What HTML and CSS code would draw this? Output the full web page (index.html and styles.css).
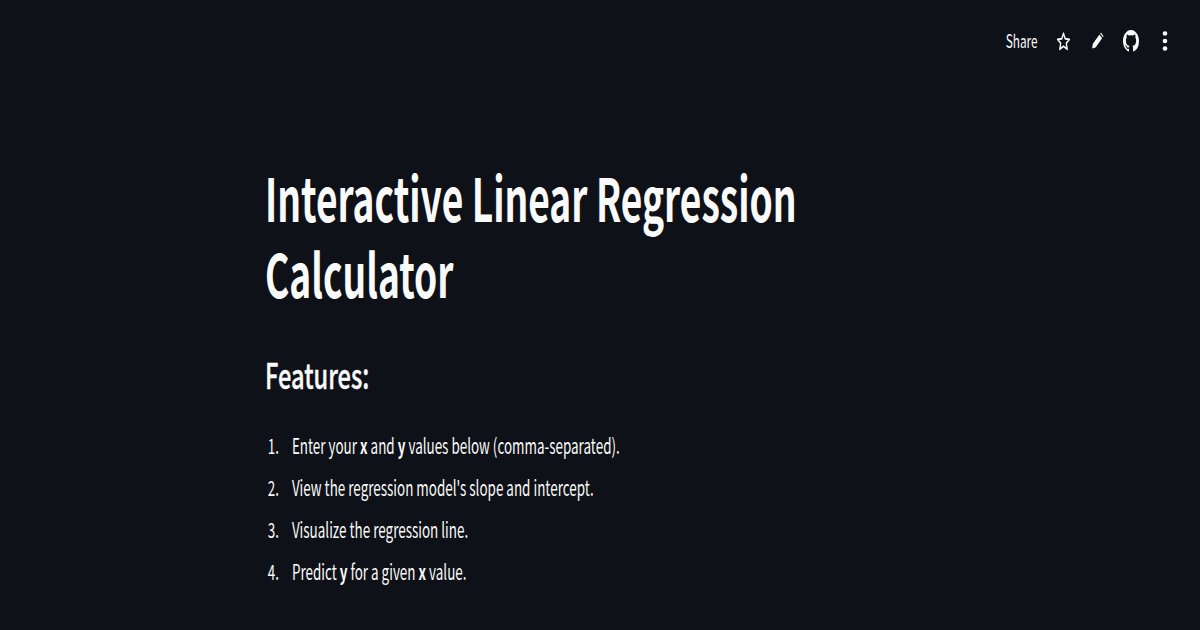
FILE: index.html
```html
<!DOCTYPE html>
<html lang="en">
	<head>
		<meta charset="utf-8" />
		<title>Interactive Linear Regression Calculator</title>
		<link rel="stylesheet" href="styles.css">
	</head>
	<body>
		<header class="toolbar">
			<span class="share">Share</span>
			<svg class="icon star" viewBox="0 0 24 24" preserveAspectRatio="none"><path d="M12 2.600l2.800 6.300 6.700.7-5 4.500 1.400 6.700-5.900-3.400-5.900 3.400 1.400-6.700-5-4.500 6.700-.7z" fill="none" stroke="currentColor" stroke-width="2.200" stroke-linejoin="round"/></svg>
			<svg class="icon pencil" viewBox="0 0 24 24" preserveAspectRatio="none"><path d="M2 22l1.400-6.400L15.600 3.400l5 5L8.400 20.600z M17 2l1.400-1.200 4.800 4.800L22 7z" fill="currentColor"/></svg>
			<svg class="icon github" viewBox="0 0 16 16" preserveAspectRatio="none"><path fill="currentColor" d="M8 0C3.58 0 0 3.58 0 8c0 3.54 2.29 6.53 5.47 7.59.4.07.55-.17.55-.38 0-.19-.01-.82-.01-1.49-2.01.37-2.53-.49-2.69-.94-.09-.23-.48-.94-.82-1.13-.28-.15-.68-.52-.01-.53.63-.01 1.08.58 1.23.82.72 1.21 1.87.87 2.33.66.07-.52.28-.87.51-1.07-1.78-.2-3.64-.89-3.64-3.95 0-.87.31-1.59.82-2.15-.08-.2-.36-1.02.08-2.12 0 0 .67-.21 2.2.82.64-.18 1.32-.27 2-.27s1.36.09 2 .27c1.53-1.04 2.2-.82 2.2-.82.44 1.1.16 1.92.08 2.12.51.56.82 1.27.82 2.15 0 3.07-1.87 3.75-3.65 3.95.29.25.54.73.54 1.48 0 1.07-.01 1.93-.01 2.2 0 .21.15.46.55.38A8.010 8.010 0 0 0 16 8c0-4.420-3.580-8-8-8z"/></svg>
			<svg class="icon dots" viewBox="0 0 10 20"><circle cx="5" cy="2.500" r="2.300" fill="currentColor"/><circle cx="5" cy="10" r="2.300" fill="currentColor"/><circle cx="5" cy="17.500" r="2.300" fill="currentColor"/></svg>
		</header>
		<main class="content">
			<h1 class="title">Interactive Linear Regression<br>Calculator</h1>
			<h2 class="subtitle">Features:</h2>
			<ol class="features">
				<li>Enter your <strong>x</strong> and <strong>y</strong> values below (comma-separated).</li>
				<li>View the regression model's slope and intercept.</li>
				<li>Visualize the regression line.</li>
				<li>Predict <strong>y</strong> for a given <strong>x</strong> value.</li>
			</ol>
		</main>
	</body>
</html>
```

FILE: styles.css
```css
body {
	margin: 0;
	height: 630px;
	overflow: hidden;
	background: #0e1117;
	color: #fafafa;
	font-family: "Noto Sans CJK SC", "Source Sans Pro", sans-serif;
}
.toolbar {
	display: flex;
	align-items: center;
	justify-content: flex-end;
	height: 24px;
	padding: 29px 30px 0 0;
}
.share {
	font-size: 18px;
	line-height: 24px;
	margin: 0 18px 2px 0;
	display: inline-block;
	transform: scaleX(0.656);
	transform-origin: right center;
}
.icon {
	display: block;
}
.star {
	width: 15px;
	height: 21px;
	margin-right: 20px;
}
.pencil {
	width: 13px;
	height: 18px;
	margin-right: 19px;
}
.github {
	width: 16px;
	height: 22px;
	margin-right: 21px;
}
.dots {
	width: 10px;
	height: 20px;
}
.content {
	padding: 105px 0 0 265px;
	width: 900px;
}
.title {
	margin: 0;
	font-size: 60px;
	line-height: 76px;
	font-weight: 700;
	transform: scaleX(0.619);
	transform-origin: left top;
}
.subtitle {
	margin: 42px 0 0;
	font-size: 35px;
	line-height: 44px;
	font-weight: 500;
	-webkit-text-stroke: 0.4px #fafafa;
	transform: scaleX(0.675);
	transform-origin: left top;
}
.features {
	margin: 28px 0 0;
	padding: 0 0 0 26.5px;
	font-size: 21px;
	line-height: 42px;
	font-weight: 400;
	transform: scaleX(0.64);
	transform-origin: left top;
	width: 900px;
}
.features li {
	padding-left: 15.5px;
}
```
